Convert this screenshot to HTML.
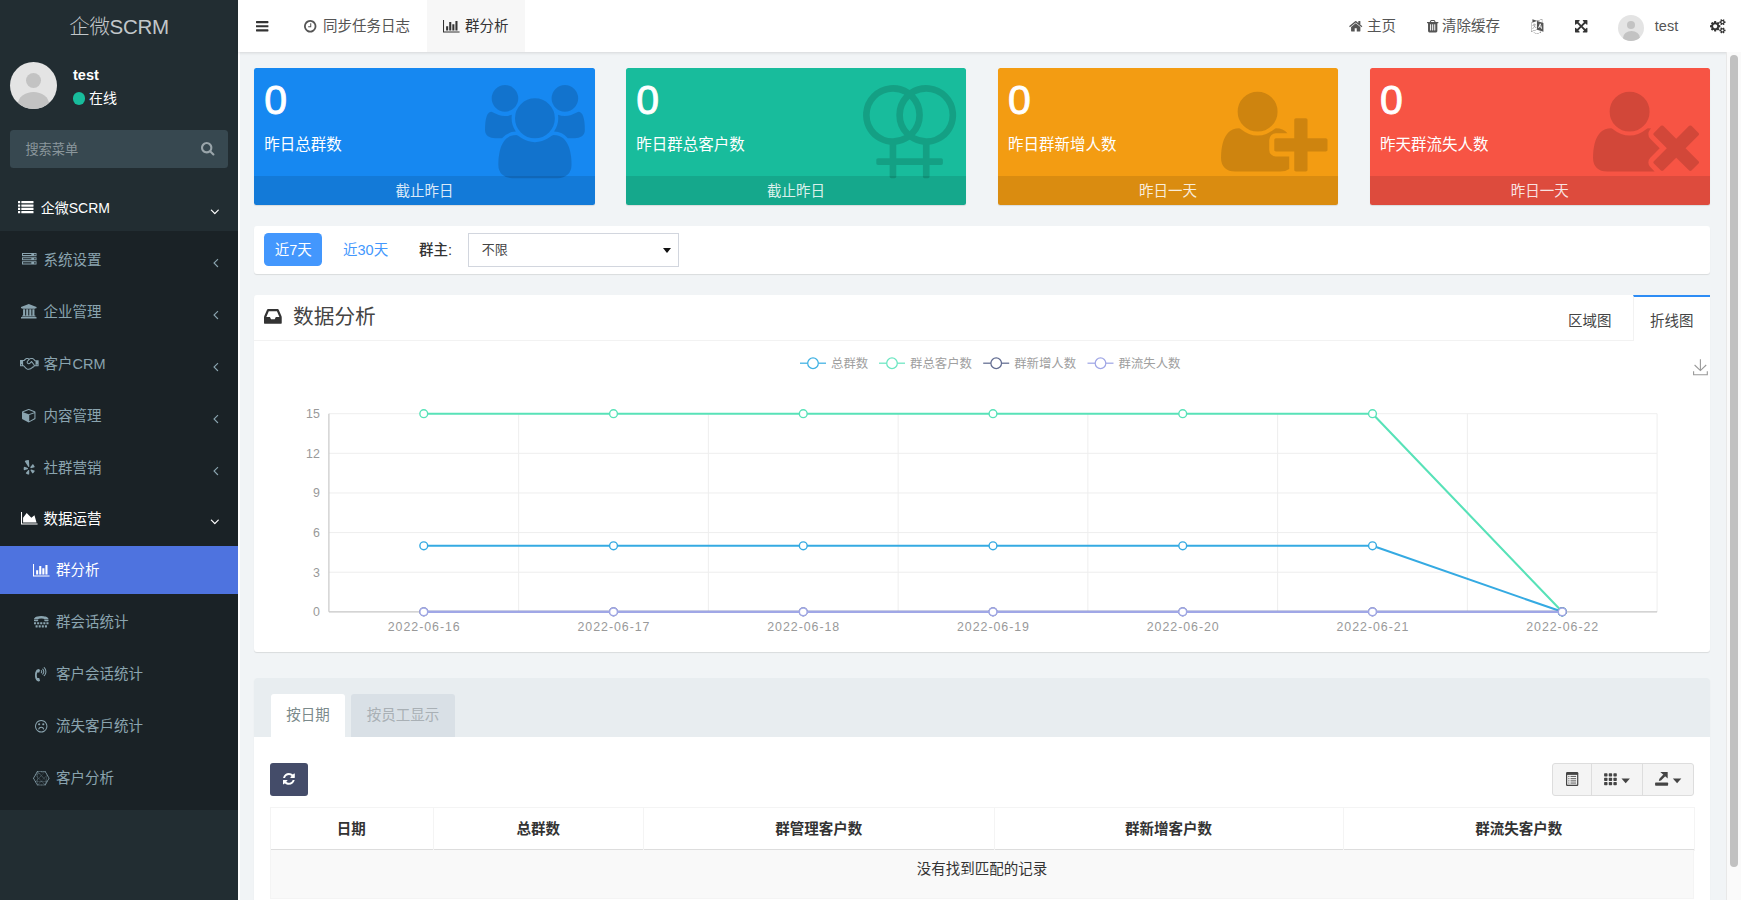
<!DOCTYPE html>
<html lang="zh-CN">
<head>
<meta charset="utf-8">
<title>企微SCRM</title>
<style>
*{box-sizing:border-box;margin:0;padding:0}
html,body{width:1741px;height:900px;overflow:hidden}
body{font-family:"Liberation Sans","Noto Sans CJK SC",sans-serif;font-size:14.5px;color:#333;background:#f1f4f6;position:relative}
svg.i{display:inline-block;fill:currentColor;vertical-align:middle;overflow:visible}
.abs{position:absolute}
/* sidebar */
#side{position:absolute;left:0;top:0;width:238px;height:900px;background:#222d32;color:#b8c7ce}
#logo{position:absolute;left:0;top:1.3px;width:238px;height:52px;line-height:52px;text-align:center;font-size:20.5px;font-weight:300;color:#c2c7ca;letter-spacing:-0.3px}
#avatar{position:absolute;left:10px;top:62px;width:47px;height:47px;border-radius:50%;background:#e4e4e4;overflow:hidden}
#avatar:before{content:"";position:absolute;left:16px;top:11px;width:15px;height:15px;border-radius:50%;background:#c3c3c3}
#avatar:after{content:"";position:absolute;left:8px;top:29.5px;width:31px;height:24px;border-radius:50%;background:#c3c3c3}
#uname{position:absolute;left:73px;top:66px;font-weight:bold;font-size:14.5px;color:#fff;line-height:18px}
#ustat{position:absolute;left:72.5px;top:89px;font-size:14px;color:#fff;line-height:18px;white-space:nowrap}
#ustat b{display:inline-block;width:12.5px;height:12.5px;border-radius:50%;background:#18bc9c;vertical-align:-1.5px;margin-right:4px}
#search{position:absolute;left:10.4px;top:129.7px;width:217.4px;height:38.3px;background:#374850;border-radius:3.5px}
#search span{position:absolute;left:15px;top:1.4px;line-height:38px;font-size:13.2px;color:#8b979c}
#search svg{position:absolute;left:190.6px;top:11px;color:#9aa5aa}
.m1{position:absolute;left:0;width:238px;height:52px}
.m1 .tx{position:absolute;left:40.7px;top:0.5px;line-height:52px;font-size:14px;color:#fff;white-space:nowrap}
#sub{position:absolute;left:0;top:231px;width:238px;height:579px;background:#1a2226}
.m2{position:absolute;left:0;width:238px;height:52px;color:#8aa4af}
.m2 .tx{position:absolute;left:43.5px;top:1px;line-height:52px;font-size:14.5px;white-space:nowrap}
.m2 .ic{position:absolute;left:20px;top:0;height:52px;width:18px;display:flex;align-items:center;justify-content:center}
.m2 .ar{position:absolute;left:213px;top:3px;height:52px;display:flex;align-items:center}
.m2.on{color:#fff}
.m3{position:absolute;left:0;width:238px;height:48px;color:#8aa4af}
.m3 .tx{position:absolute;left:56px;top:0.3px;line-height:48px;font-size:14.5px;white-space:nowrap}
.m3 .ic{position:absolute;left:32px;top:0;height:48px;width:18px;display:flex;align-items:center;justify-content:center}
.m3.on{background:#4e73df;color:#fff}
/* header */
#top{position:absolute;left:238px;top:0;width:1503px;height:52px;background:#fff;box-shadow:0 1px 3px rgba(0,0,0,.12);color:#555}
#top .t{position:absolute;top:0;line-height:52px;font-size:14.5px;white-space:nowrap}
#top .ic{position:absolute;top:0;height:52px;display:flex;align-items:center}
#tabon{position:absolute;left:189px;top:0;width:98px;height:52px;background:#f7f7f7}
/* cards */
.card{position:absolute;top:67.5px;width:341.3px;height:137px;border-radius:2.5px;color:#fff;box-shadow:0 1px 1px rgba(0,0,0,.1);overflow:hidden}
.card .n{position:absolute;left:10.5px;top:8.1px;font-size:41px;line-height:48px;font-weight:normal;-webkit-text-stroke:0.9px #fff}
.card .l{position:absolute;left:10.5px;top:66.7px;font-size:15.5px;line-height:22px;white-space:nowrap}
.card .f{position:absolute;left:0;top:108px;width:100%;height:29px;background:rgba(0,0,0,.1);text-align:center;font-size:14.5px;line-height:30.2px;color:rgba(255,255,255,.85)}
.card .bg{position:absolute;color:rgba(0,0,0,.15)}
/* panels */
.panel{position:absolute;left:254px;width:1456px;background:#fff;border-radius:3px;box-shadow:0 1px 1px rgba(0,0,0,.1)}
.th{top:131.4px;height:41px;line-height:41px;text-align:center;font-weight:bold;font-size:14.5px;color:#333}
.vl{top:129.6px;width:1px;height:44px;background:#f4f4f4}
.caret{width:0;height:0;border-left:4px solid transparent;border-right:4px solid transparent;border-top:4.2px solid #444}
</style>
</head>
<body>
<div id="side">
  <div id="logo">企微SCRM</div>
  <div id="avatar"></div>
  <div id="uname">test</div>
  <div id="ustat"><b></b>在线</div>
  <div id="search"><span>搜索菜单</span><svg class="i " style="width:13.46px;height:14.5px;" viewBox="0 -1536 1664 1792"><path transform="scale(1,-1)" d="M1152 704q0 185 -131.5 316.5t-316.5 131.5t-316.5 -131.5t-131.5 -316.5t131.5 -316.5t316.5 -131.5t316.5 131.5t131.5 316.5zM1664 -128q0 -52 -38 -90t-90 -38q-54 0 -90 38l-343 342q-179 -124 -399 -124q-143 0 -273.5 55.5t-225 150t-150 225t-55.5 273.5
t55.5 273.5t150 225t225 150t273.5 55.5t273.5 -55.5t225 -150t150 -225t55.5 -273.5q0 -220 -124 -399l343 -343q37 -37 37 -90z"/></svg></div>
  <div class="m1" style="top:181px"><span class="abs" style="left:18px;top:1px;height:52px;display:flex;align-items:center;color:#fff"><svg class="i " style="width:15.50px;height:15.5px;" viewBox="0 -1536 1792 1792"><path transform="scale(1,-1)" d="M256 224v-192q0 -13 -9.5 -22.5t-22.5 -9.5h-192q-13 0 -22.5 9.5t-9.5 22.5v192q0 13 9.5 22.5t22.5 9.5h192q13 0 22.5 -9.5t9.5 -22.5zM256 608v-192q0 -13 -9.5 -22.5t-22.5 -9.5h-192q-13 0 -22.5 9.5t-9.5 22.5v192q0 13 9.5 22.5t22.5 9.5h192q13 0 22.5 -9.5
t9.5 -22.5zM256 992v-192q0 -13 -9.5 -22.5t-22.5 -9.5h-192q-13 0 -22.5 9.5t-9.5 22.5v192q0 13 9.5 22.5t22.5 9.5h192q13 0 22.5 -9.5t9.5 -22.5zM1792 224v-192q0 -13 -9.5 -22.5t-22.5 -9.5h-1344q-13 0 -22.5 9.5t-9.5 22.5v192q0 13 9.5 22.5t22.5 9.5h1344
q13 0 22.5 -9.5t9.5 -22.5zM256 1376v-192q0 -13 -9.5 -22.5t-22.5 -9.5h-192q-13 0 -22.5 9.5t-9.5 22.5v192q0 13 9.5 22.5t22.5 9.5h192q13 0 22.5 -9.5t9.5 -22.5zM1792 608v-192q0 -13 -9.5 -22.5t-22.5 -9.5h-1344q-13 0 -22.5 9.5t-9.5 22.5v192q0 13 9.5 22.5
t22.5 9.5h1344q13 0 22.5 -9.5t9.5 -22.5zM1792 992v-192q0 -13 -9.5 -22.5t-22.5 -9.5h-1344q-13 0 -22.5 9.5t-9.5 22.5v192q0 13 9.5 22.5t22.5 9.5h1344q13 0 22.5 -9.5t9.5 -22.5zM1792 1376v-192q0 -13 -9.5 -22.5t-22.5 -9.5h-1344q-13 0 -22.5 9.5t-9.5 22.5v192
q0 13 9.5 22.5t22.5 9.5h1344q13 0 22.5 -9.5t9.5 -22.5z"/></svg></span><span class="tx">企微SCRM</span><span class="abs" style="left:210px;top:4px;height:52px;display:flex;align-items:center;color:#fff"><svg class="i " style="width:9.64px;height:15.0px;" viewBox="0 -1536 1152 1792"><path transform="scale(1,-1)" d="M1075 800q0 -13 -10 -23l-466 -466q-10 -10 -23 -10t-23 10l-466 466q-10 10 -10 23t10 23l50 50q10 10 23 10t23 -10l393 -393l393 393q10 10 23 10t23 -10l50 -50q10 -10 10 -23z"/></svg></span></div>
  <div id="sub">
    <div class="m2" style="top:2px"><span class="ic"><svg class="i " style="width:14.50px;height:14.5px;" viewBox="0 -1536 1792 1792"><path transform="scale(1,-1)" d="M128 128h1024v128h-1024v-128zM128 640h1024v128h-1024v-128zM1696 192q0 40 -28 68t-68 28t-68 -28t-28 -68t28 -68t68 -28t68 28t28 68zM128 1152h1024v128h-1024v-128zM1696 704q0 40 -28 68t-68 28t-68 -28t-28 -68t28 -68t68 -28t68 28t28 68zM1696 1216
q0 40 -28 68t-68 28t-68 -28t-28 -68t28 -68t68 -28t68 28t28 68zM1792 384v-384h-1792v384h1792zM1792 896v-384h-1792v384h1792zM1792 1408v-384h-1792v384h1792z"/></svg></span><span class="tx">系统设置</span><span class="ar"><svg class="i " style="width:5.36px;height:15.0px;" viewBox="0 -1536 640 1792"><path transform="scale(1,-1)" d="M627 992q0 -13 -10 -23l-393 -393l393 -393q10 -10 10 -23t-10 -23l-50 -50q-10 -10 -23 -10t-23 10l-466 466q-10 10 -10 23t10 23l466 466q10 10 23 10t23 -10l50 -50q10 -10 10 -23z"/></svg></span></div>
    <div class="m2" style="top:54px"><span class="ic"><svg class="i " style="width:16.57px;height:14.5px;" viewBox="0 -1536 2048 1792"><path transform="scale(1,-1)" d="M960 1536l960 -384v-128h-128q0 -26 -20.5 -45t-48.5 -19h-1526q-28 0 -48.5 19t-20.5 45h-128v128zM256 896h256v-768h128v768h256v-768h128v768h256v-768h128v768h256v-768h59q28 0 48.5 -19t20.5 -45v-64h-1664v64q0 26 20.5 45t48.5 19h59v768zM1851 -64
q28 0 48.5 -19t20.5 -45v-128h-1920v128q0 26 20.5 45t48.5 19h1782z"/></svg></span><span class="tx">企业管理</span><span class="ar"><svg class="i " style="width:5.36px;height:15.0px;" viewBox="0 -1536 640 1792"><path transform="scale(1,-1)" d="M627 992q0 -13 -10 -23l-393 -393l393 -393q10 -10 10 -23t-10 -23l-50 -50q-10 -10 -23 -10t-23 10l-466 466q-10 10 -10 23t10 23l466 466q10 10 23 10t23 -10l50 -50q10 -10 10 -23z"/></svg></span></div>
    <div class="m2" style="top:106px"><span class="ic"><svg class="i " style="width:18.64px;height:14.5px;" viewBox="0 -1536 2304 1792"><path transform="scale(1,-1)" d="M192 384q40 0 56 32t0 64t-56 32t-56 -32t0 -64t56 -32zM1665 442q-10 13 -38.5 50t-41.5 54t-38 49t-42.5 53t-40.5 47t-45 49l-125 -140q-83 -94 -208.5 -92t-205.5 98q-57 69 -56.5 158t58.5 157l177 206q-22 11 -51 16.5t-47.5 6t-56.5 -0.5t-49 -1q-92 0 -158 -66
l-158 -158h-155v-544q5 0 21 0.5t22 0t19.5 -2t20.5 -4.5t17.5 -8.5t18.5 -13.5l297 -292q115 -111 227 -111q78 0 125 47q57 -20 112.5 8t72.5 85q74 -6 127 44q20 18 36 45.5t14 50.5q10 -10 43 -10q43 0 77 21t49.5 53t12 71.5t-30.5 73.5zM1824 384h96v512h-93l-157 180
q-66 76 -169 76h-167q-89 0 -146 -67l-209 -243q-28 -33 -28 -75t27 -75q43 -51 110 -52t111 49l193 218q25 23 53.5 21.5t47 -27t8.5 -56.5q16 -19 56 -63t60 -68q29 -36 82.5 -105.5t64.5 -84.5q52 -66 60 -140zM2112 384q40 0 56 32t0 64t-56 32t-56 -32t0 -64t56 -32z
M2304 960v-640q0 -26 -19 -45t-45 -19h-434q-27 -65 -82 -106.5t-125 -51.5q-33 -48 -80.5 -81.5t-102.5 -45.5q-42 -53 -104.5 -81.5t-128.5 -24.5q-60 -34 -126 -39.5t-127.5 14t-117 53.5t-103.5 81l-287 282h-358q-26 0 -45 19t-19 45v672q0 26 19 45t45 19h421
q14 14 47 48t47.5 48t44 40t50.5 37.5t51 25.5t62 19.5t68 5.5h117q99 0 181 -56q82 56 181 56h167q35 0 67 -6t56.5 -14.5t51.5 -26.5t44.5 -31t43 -39.5t39 -42t41 -48t41.5 -48.5h355q26 0 45 -19t19 -45z"/></svg></span><span class="tx">客户CRM</span><span class="ar"><svg class="i " style="width:5.36px;height:15.0px;" viewBox="0 -1536 640 1792"><path transform="scale(1,-1)" d="M627 992q0 -13 -10 -23l-393 -393l393 -393q10 -10 10 -23t-10 -23l-50 -50q-10 -10 -23 -10t-23 10l-466 466q-10 10 -10 23t10 23l466 466q10 10 23 10t23 -10l50 -50q10 -10 10 -23z"/></svg></span></div>
    <div class="m2" style="top:158px"><span class="ic"><svg class="i " style="width:14.50px;height:14.5px;" viewBox="0 -1536 1792 1792"><path transform="scale(1,-1)" d="M896 -93l640 349v636l-640 -233v-752zM832 772l698 254l-698 254l-698 -254zM1664 1024v-768q0 -35 -18 -65t-49 -47l-704 -384q-28 -16 -61 -16t-61 16l-704 384q-31 17 -49 47t-18 65v768q0 40 23 73t61 47l704 256q22 8 44 8t44 -8l704 -256q38 -14 61 -47t23 -73z
"/></svg></span><span class="tx">内容管理</span><span class="ar"><svg class="i " style="width:5.36px;height:15.0px;" viewBox="0 -1536 640 1792"><path transform="scale(1,-1)" d="M627 992q0 -13 -10 -23l-393 -393l393 -393q10 -10 10 -23t-10 -23l-50 -50q-10 -10 -23 -10t-23 10l-466 466q-10 10 -10 23t10 23l466 466q10 10 23 10t23 -10l50 -50q10 -10 10 -23z"/></svg></span></div>
    <div class="m2" style="top:210px"><span class="ic"><svg class="i " style="width:12.43px;height:14.5px;" viewBox="0 -1536 1536 1792"><path transform="scale(1,-1)" d="M773 217v-127q-1 -292 -6 -305q-12 -32 -51 -40q-54 -9 -181.5 38t-162.5 89q-13 15 -17 36q-1 12 4 26q4 10 34 47t181 216q1 0 60 70q15 19 39.5 24.5t49.5 -3.5q24 -10 37.5 -29t12.5 -42zM624 468q-3 -55 -52 -70l-120 -39q-275 -88 -292 -88q-35 2 -54 36
q-12 25 -17 75q-8 76 1 166.5t30 124.5t56 32q13 0 202 -77q71 -29 115 -47l84 -34q23 -9 35.5 -30.5t11.5 -48.5zM1450 171q-7 -54 -91.5 -161t-135.5 -127q-37 -14 -63 7q-14 10 -184 287l-47 77q-14 21 -11.5 46t19.5 46q35 43 83 26q1 -1 119 -40q203 -66 242 -79.5
t47 -20.5q28 -22 22 -61zM778 803q5 -102 -54 -122q-58 -17 -114 71l-378 598q-8 35 19 62q41 43 207.5 89.5t224.5 31.5q40 -10 49 -45q3 -18 22 -305.5t24 -379.5zM1440 695q3 -39 -26 -59q-15 -10 -329 -86q-67 -15 -91 -23l1 2q-23 -6 -46 4t-37 32q-30 47 0 87
q1 1 75 102q125 171 150 204t34 39q28 19 65 2q48 -23 123 -133.5t81 -167.5v-3z"/></svg></span><span class="tx">社群营销</span><span class="ar"><svg class="i " style="width:5.36px;height:15.0px;" viewBox="0 -1536 640 1792"><path transform="scale(1,-1)" d="M627 992q0 -13 -10 -23l-393 -393l393 -393q10 -10 10 -23t-10 -23l-50 -50q-10 -10 -23 -10t-23 10l-466 466q-10 10 -10 23t10 23l466 466q10 10 23 10t23 -10l50 -50q10 -10 10 -23z"/></svg></span></div>
    <div class="m2 on" style="top:261px"><span class="ic"><svg class="i " style="width:16.57px;height:14.5px;" viewBox="0 -1536 2048 1792"><path transform="scale(1,-1)" d="M2048 0v-128h-2048v1536h128v-1408h1920zM1664 1024l256 -896h-1664v576l448 576l576 -576z"/></svg></span><span class="tx">数据运营</span><span class="ar" style="left:210px;top:0;padding-top:7px"><svg class="i " style="width:9.64px;height:15.0px;" viewBox="0 -1536 1152 1792"><path transform="scale(1,-1)" d="M1075 800q0 -13 -10 -23l-466 -466q-10 -10 -23 -10t-23 10l-466 466q-10 10 -10 23t10 23l50 50q10 10 23 10t23 -10l393 -393l393 393q10 10 23 10t23 -10l50 -50q10 -10 10 -23z"/></svg></span></div>
    <div class="m3 on" style="top:315px"><span class="ic"><svg class="i " style="width:16.57px;height:14.5px;" viewBox="0 -1536 2048 1792"><path transform="scale(1,-1)" d="M640 640v-512h-256v512h256zM1024 1152v-1024h-256v1024h256zM2048 0v-128h-2048v1536h128v-1408h1920zM1408 896v-768h-256v768h256zM1792 1280v-1152h-256v1152h256z"/></svg></span><span class="tx">群分析</span></div>
    <div class="m3" style="top:367px"><span class="ic"><svg class="i " style="width:14.50px;height:14.5px;" viewBox="0 -1536 1792 1792"><path transform="scale(1,-1)" d="M448 224v-192q0 -14 -9 -23t-23 -9h-192q-14 0 -23 9t-9 23v192q0 14 9 23t23 9h192q14 0 23 -9t9 -23zM256 608v-192q0 -14 -9 -23t-23 -9h-192q-14 0 -23 9t-9 23v192q0 14 9 23t23 9h192q14 0 23 -9t9 -23zM832 224v-192q0 -14 -9 -23t-23 -9h-192q-14 0 -23 9t-9 23
v192q0 14 9 23t23 9h192q14 0 23 -9t9 -23zM640 608v-192q0 -14 -9 -23t-23 -9h-192q-14 0 -23 9t-9 23v192q0 14 9 23t23 9h192q14 0 23 -9t9 -23zM66 768q-28 0 -47 19t-19 46v129h514v-129q0 -27 -19 -46t-46 -19h-383zM1216 224v-192q0 -14 -9 -23t-23 -9h-192
q-14 0 -23 9t-9 23v192q0 14 9 23t23 9h192q14 0 23 -9t9 -23zM1024 608v-192q0 -14 -9 -23t-23 -9h-192q-14 0 -23 9t-9 23v192q0 14 9 23t23 9h192q14 0 23 -9t9 -23zM1600 224v-192q0 -14 -9 -23t-23 -9h-192q-14 0 -23 9t-9 23v192q0 14 9 23t23 9h192q14 0 23 -9t9 -23
zM1408 608v-192q0 -14 -9 -23t-23 -9h-192q-14 0 -23 9t-9 23v192q0 14 9 23t23 9h192q14 0 23 -9t9 -23zM1792 1016v-13h-514v10q0 104 -382 102q-382 -1 -382 -102v-10h-514v13q0 17 8.5 43t34 64t65.5 75.5t110.5 76t160 67.5t224 47.5t293.5 18.5t293 -18.5t224 -47.5
t160.5 -67.5t110.5 -76t65.5 -75.5t34 -64t8.5 -43zM1792 608v-192q0 -14 -9 -23t-23 -9h-192q-14 0 -23 9t-9 23v192q0 14 9 23t23 9h192q14 0 23 -9t9 -23zM1792 962v-129q0 -27 -19 -46t-46 -19h-384q-27 0 -46 19t-19 46v129h514z"/></svg></span><span class="tx">群会话统计</span></div>
    <div class="m3" style="top:419px"><span class="ic"><svg class="i " style="width:11.39px;height:14.5px;" viewBox="0 -1536 1408 1792"><path transform="scale(1,-1)" d="M617 -153q0 11 -13 58t-31 107t-20 69q-1 4 -5 26.5t-8.5 36t-13.5 21.5q-15 14 -51 14q-23 0 -70 -5.5t-71 -5.5q-34 0 -47 11q-6 5 -11 15.5t-7.5 20t-6.5 24t-5 18.5q-37 128 -37 255t37 255q1 4 5 18.5t6.5 24t7.5 20t11 15.5q13 11 47 11q24 0 71 -5.5t70 -5.5
q36 0 51 14q9 8 13.5 21.5t8.5 36t5 26.5q2 9 20 69t31 107t13 58q0 22 -43.5 52.5t-75.5 42.5q-20 8 -45 8q-34 0 -98 -18q-57 -17 -96.5 -40.5t-71 -66t-46 -70t-45.5 -94.5q-6 -12 -9 -19q-49 -107 -68 -216t-19 -244t19 -244t68 -216q56 -122 83 -161q63 -91 179 -127
l6 -2q64 -18 98 -18q25 0 45 8q32 12 75.5 42.5t43.5 52.5zM776 760q-26 0 -45 19t-19 45.5t19 45.5q37 37 37 90q0 52 -37 91q-19 19 -19 45t19 45t45 19t45 -19q75 -75 75 -181t-75 -181q-21 -19 -45 -19zM957 579q-27 0 -45 19q-19 19 -19 45t19 45q112 114 112 272
t-112 272q-19 19 -19 45t19 45t45 19t45 -19q150 -150 150 -362t-150 -362q-18 -19 -45 -19zM1138 398q-27 0 -45 19q-19 19 -19 45t19 45q90 91 138.5 208t48.5 245t-48.5 245t-138.5 208q-19 19 -19 45t19 45t45 19t45 -19q109 -109 167 -249t58 -294t-58 -294t-167 -249
q-18 -19 -45 -19z"/></svg></span><span class="tx">客户会话统计</span></div>
    <div class="m3" style="top:471px"><span class="ic"><svg class="i " style="width:12.43px;height:14.5px;" viewBox="0 -1536 1536 1792"><path transform="scale(1,-1)" d="M1134 307q8 -25 -4 -48.5t-37 -31.5t-49 4t-32 38q-25 80 -92.5 129.5t-151.5 49.5t-151.5 -49.5t-92.5 -129.5q-8 -26 -31.5 -38t-48.5 -4q-26 8 -38 31.5t-4 48.5q37 121 138 195t228 74t228 -74t138 -195zM640 896q0 -53 -37.5 -90.5t-90.5 -37.5t-90.5 37.5
t-37.5 90.5t37.5 90.5t90.5 37.5t90.5 -37.5t37.5 -90.5zM1152 896q0 -53 -37.5 -90.5t-90.5 -37.5t-90.5 37.5t-37.5 90.5t37.5 90.5t90.5 37.5t90.5 -37.5t37.5 -90.5zM1408 640q0 130 -51 248.5t-136.5 204t-204 136.5t-248.5 51t-248.5 -51t-204 -136.5t-136.5 -204
t-51 -248.5t51 -248.5t136.5 -204t204 -136.5t248.5 -51t248.5 51t204 136.5t136.5 204t51 248.5zM1536 640q0 -209 -103 -385.5t-279.5 -279.5t-385.5 -103t-385.5 103t-279.5 279.5t-103 385.5t103 385.5t279.5 279.5t385.5 103t385.5 -103t279.5 -279.5t103 -385.5z"/></svg></span><span class="tx">流失客戶统计</span></div>
    <div class="m3" style="top:523px"><span class="ic"><svg class="i " style="width:16.57px;height:14.5px;" viewBox="0 -1536 2048 1792"><path transform="scale(1,-1)" d="M2048 641q0 -21 -13 -36.5t-33 -19.5l-205 -356q3 -9 3 -18q0 -20 -12.5 -35.5t-32.5 -19.5l-193 -337q3 -8 3 -16q0 -23 -16.5 -40t-40.5 -17q-25 0 -41 18h-400q-17 -20 -43 -20t-43 20h-399q-17 -20 -43 -20q-23 0 -40 16.5t-17 40.5q0 8 4 20l-193 335
q-20 4 -32.5 19.5t-12.5 35.5q0 9 3 18l-206 356q-20 5 -32.5 20.5t-12.5 35.5q0 21 13.5 36.5t33.5 19.5l199 344q0 1 -0.5 3t-0.5 3q0 36 34 51l209 363q-4 10 -4 18q0 24 17 40.5t40 16.5q26 0 44 -21h396q16 21 43 21t43 -21h398q18 21 44 21q23 0 40 -16.5t17 -40.5
q0 -6 -4 -18l207 -358q23 -1 39 -17.5t16 -38.5q0 -13 -7 -27l187 -324q19 -4 31.5 -19.5t12.5 -35.5zM1063 -158h389l-342 354h-143l-342 -354h360q18 16 39 16t39 -16zM112 654q1 -4 1 -13q0 -10 -2 -15l208 -360l15 -6l188 199v347l-187 194q-13 -8 -29 -10zM986 1438
h-388l190 -200l554 200h-280q-16 -16 -38 -16t-38 16zM1689 226q1 6 5 11l-64 68l-17 -79h76zM1583 226l22 105l-252 266l-296 -307l63 -64h463zM1495 -142l16 28l65 310h-427l333 -343q8 4 13 5zM578 -158h5l342 354h-373v-335l4 -6q14 -5 22 -13zM552 226h402l64 66
l-309 321l-157 -166v-221zM359 226h163v189l-168 -177q4 -8 5 -12zM358 1051q0 -1 0.5 -2t0.5 -2q0 -16 -8 -29l171 -177v269zM552 1121v-311l153 -157l297 314l-223 236zM556 1425l-4 -8v-264l205 74l-191 201q-6 -2 -10 -3zM1447 1438h-16l-621 -224l213 -225zM1023 946
l-297 -315l311 -319l296 307zM688 634l-136 141v-284zM1038 270l-42 -44h85zM1374 618l238 -251l132 624l-3 5l-1 1zM1718 1018q-8 13 -8 29v2l-216 376q-5 1 -13 5l-437 -463l310 -327zM522 1142v223l-163 -282zM522 196h-163l163 -283v283zM1607 196l-48 -227l130 227h-82
zM1729 266l207 361q-2 10 -2 14q0 1 3 16l-171 296l-129 -612l77 -82q5 3 15 7z"/></svg></span><span class="tx">客户分析</span></div>
  </div>
</div>
<div class="abs" style="left:238px;top:52px;width:1.9px;height:848px;background:#fff"></div>
<div id="top">
  <div id="tabon"></div>
  <span class="ic" style="left:17.8px;color:#333"><svg class="i " style="width:12.43px;height:14.5px;" viewBox="0 -1536 1536 1792"><path transform="scale(1,-1)" d="M1536 192v-128q0 -26 -19 -45t-45 -19h-1408q-26 0 -45 19t-19 45v128q0 26 19 45t45 19h1408q26 0 45 -19t19 -45zM1536 704v-128q0 -26 -19 -45t-45 -19h-1408q-26 0 -45 19t-19 45v128q0 26 19 45t45 19h1408q26 0 45 -19t19 -45zM1536 1216v-128q0 -26 -19 -45
t-45 -19h-1408q-26 0 -45 19t-19 45v128q0 26 19 45t45 19h1408q26 0 45 -19t19 -45z"/></svg></span>
  <span class="ic" style="left:65.8px"><svg class="i " style="width:12.43px;height:14.5px;" viewBox="0 -1536 1536 1792"><path transform="scale(1,-1)" d="M896 992v-448q0 -14 -9 -23t-23 -9h-320q-14 0 -23 9t-9 23v64q0 14 9 23t23 9h224v352q0 14 9 23t23 9h64q14 0 23 -9t9 -23zM1312 640q0 148 -73 273t-198 198t-273 73t-273 -73t-198 -198t-73 -273t73 -273t198 -198t273 -73t273 73t198 198t73 273zM1536 640
q0 -209 -103 -385.5t-279.5 -279.5t-385.5 -103t-385.5 103t-279.5 279.5t-103 385.5t103 385.5t279.5 279.5t385.5 103t385.5 -103t279.5 -279.5t103 -385.5z"/></svg></span><span class="t" style="left:85px">同步任务日志</span>
  <span class="ic" style="left:204.8px;color:#333"><svg class="i " style="width:16.57px;height:14.5px;" viewBox="0 -1536 2048 1792"><path transform="scale(1,-1)" d="M640 640v-512h-256v512h256zM1024 1152v-1024h-256v1024h256zM2048 0v-128h-2048v1536h128v-1408h1920zM1408 896v-768h-256v768h256zM1792 1280v-1152h-256v1152h256z"/></svg></span><span class="t" style="left:227px;color:#333">群分析</span>
  <span class="ic" style="left:1110.8px"><svg class="i " style="width:13.46px;height:14.5px;" viewBox="0 -1536 1664 1792"><path transform="scale(1,-1)" d="M1408 544v-480q0 -26 -19 -45t-45 -19h-384v384h-256v-384h-384q-26 0 -45 19t-19 45v480q0 1 0.5 3t0.5 3l575 474l575 -474q1 -2 1 -6zM1631 613l-62 -74q-8 -9 -21 -11h-3q-13 0 -21 7l-692 577l-692 -577q-12 -8 -24 -7q-13 2 -21 11l-62 74q-8 10 -7 23.5t11 21.5
l719 599q32 26 76 26t76 -26l244 -204v195q0 14 9 23t23 9h192q14 0 23 -9t9 -23v-408l219 -182q10 -8 11 -21.5t-7 -23.5z"/></svg></span><span class="t" style="left:1129px">主页</span>
  <span class="ic" style="left:1188.8px"><svg class="i " style="width:11.39px;height:14.5px;" viewBox="0 -1536 1408 1792"><path transform="scale(1,-1)" d="M512 160v704q0 14 -9 23t-23 9h-64q-14 0 -23 -9t-9 -23v-704q0 -14 9 -23t23 -9h64q14 0 23 9t9 23zM768 160v704q0 14 -9 23t-23 9h-64q-14 0 -23 -9t-9 -23v-704q0 -14 9 -23t23 -9h64q14 0 23 9t9 23zM1024 160v704q0 14 -9 23t-23 9h-64q-14 0 -23 -9t-9 -23v-704
q0 -14 9 -23t23 -9h64q14 0 23 9t9 23zM480 1152h448l-48 117q-7 9 -17 11h-317q-10 -2 -17 -11zM1408 1120v-64q0 -14 -9 -23t-23 -9h-96v-948q0 -83 -47 -143.5t-113 -60.5h-832q-66 0 -113 58.5t-47 141.5v952h-96q-14 0 -23 9t-9 23v64q0 14 9 23t23 9h309l70 167
q15 37 54 63t79 26h320q40 0 79 -26t54 -63l70 -167h309q14 0 23 -9t9 -23z"/></svg></span><span class="t" style="left:1204px">清除缓存</span>
  <span class="ic" style="left:1292.8px"><svg class="i " style="width:12.43px;height:14.5px;" viewBox="0 -1536 1536 1792"><path transform="scale(1,-1)" d="M654 458q-1 -3 -12.5 0.5t-31.5 11.5l-20 9q-44 20 -87 49q-7 5 -41 31.5t-38 28.5q-67 -103 -134 -181q-81 -95 -105 -110q-4 -2 -19.5 -4t-18.5 0q6 4 82 92q21 24 85.5 115t78.5 118q17 30 51 98.5t36 77.5q-8 1 -110 -33q-8 -2 -27.5 -7.5t-34.5 -9.5t-17 -5
q-2 -2 -2 -10.5t-1 -9.5q-5 -10 -31 -15q-23 -7 -47 0q-18 4 -28 21q-4 6 -5 23q6 2 24.5 5t29.5 6q58 16 105 32q100 35 102 35q10 2 43 19.5t44 21.5q9 3 21.5 8t14.5 5.5t6 -0.5q2 -12 -1 -33q0 -2 -12.5 -27t-26.5 -53.5t-17 -33.5q-25 -50 -77 -131l64 -28
q12 -6 74.5 -32t67.5 -28q4 -1 10.5 -25.5t4.5 -30.5zM449 944q3 -15 -4 -28q-12 -23 -50 -38q-30 -12 -60 -12q-26 3 -49 26q-14 15 -18 41l1 3q3 -3 19.5 -5t26.5 0t58 16q36 12 55 14q17 0 21 -17zM1147 815l63 -227l-139 42zM39 15l694 232v1032l-694 -233v-1031z
M1280 332l102 -31l-181 657l-100 31l-216 -536l102 -31l45 110l211 -65zM777 1294l573 -184v380zM1088 -29l158 -13l-54 -160l-40 66q-130 -83 -276 -108q-58 -12 -91 -12h-84q-79 0 -199.5 39t-183.5 85q-8 7 -8 16q0 8 5 13.5t13 5.5q4 0 18 -7.5t30.5 -16.5t20.5 -11
q73 -37 159.5 -61.5t157.5 -24.5q95 0 167 14.5t157 50.5q15 7 30.5 15.5t34 19t28.5 16.5zM1536 1050v-1079l-774 246q-14 -6 -375 -127.5t-368 -121.5q-13 0 -18 13q0 1 -1 3v1078q3 9 4 10q5 6 20 11q107 36 149 50v384l558 -198q2 0 160.5 55t316 108.5t161.5 53.5
q20 0 20 -21v-418z"/></svg></span>
  <span class="ic" style="left:1336.8px;color:#333"><svg class="i " style="width:12.43px;height:14.5px;" viewBox="0 -1536 1536 1792"><path transform="scale(1,-1)" d="M1283 995l-355 -355l355 -355l144 144q29 31 70 14q39 -17 39 -59v-448q0 -26 -19 -45t-45 -19h-448q-42 0 -59 40q-17 39 14 69l144 144l-355 355l-355 -355l144 -144q31 -30 14 -69q-17 -40 -59 -40h-448q-26 0 -45 19t-19 45v448q0 42 40 59q39 17 69 -14l144 -144
l355 355l-355 355l-144 -144q-19 -19 -45 -19q-12 0 -24 5q-40 17 -40 59v448q0 26 19 45t45 19h448q42 0 59 -40q17 -39 -14 -69l-144 -144l355 -355l355 355l-144 144q-31 30 -14 69q17 40 59 40h448q26 0 45 -19t19 -45v-448q0 -42 -39 -59q-13 -5 -25 -5q-26 0 -45 19z
"/></svg></span>
  <span class="abs" style="left:1380px;top:14.6px;width:26px;height:26px;border-radius:50%;background:#e4e4e4;overflow:hidden"><i style="position:absolute;left:8.8px;top:6px;width:8.4px;height:8.4px;border-radius:50%;background:#c3c3c3"></i><i style="position:absolute;left:4.5px;top:16.3px;width:17px;height:14px;border-radius:50%;background:#c3c3c3"></i></span><span class="t" style="left:1416.8px">test</span>
  <span class="ic" style="left:1471.8px;color:#333"><svg class="i " style="width:15.54px;height:14.5px;" viewBox="0 -1536 1920 1792"><path transform="scale(1,-1)" d="M896 640q0 106 -75 181t-181 75t-181 -75t-75 -181t75 -181t181 -75t181 75t75 181zM1664 128q0 52 -38 90t-90 38t-90 -38t-38 -90q0 -53 37.5 -90.5t90.5 -37.5t90.5 37.5t37.5 90.5zM1664 1152q0 52 -38 90t-90 38t-90 -38t-38 -90q0 -53 37.5 -90.5t90.5 -37.5
t90.5 37.5t37.5 90.5zM1280 731v-185q0 -10 -7 -19.5t-16 -10.5l-155 -24q-11 -35 -32 -76q34 -48 90 -115q7 -11 7 -20q0 -12 -7 -19q-23 -30 -82.5 -89.5t-78.5 -59.5q-11 0 -21 7l-115 90q-37 -19 -77 -31q-11 -108 -23 -155q-7 -24 -30 -24h-186q-11 0 -20 7.5t-10 17.5
l-23 153q-34 10 -75 31l-118 -89q-7 -7 -20 -7q-11 0 -21 8q-144 133 -144 160q0 9 7 19q10 14 41 53t47 61q-23 44 -35 82l-152 24q-10 1 -17 9.5t-7 19.5v185q0 10 7 19.5t16 10.5l155 24q11 35 32 76q-34 48 -90 115q-7 11 -7 20q0 12 7 20q22 30 82 89t79 59q11 0 21 -7
l115 -90q34 18 77 32q11 108 23 154q7 24 30 24h186q11 0 20 -7.5t10 -17.5l23 -153q34 -10 75 -31l118 89q8 7 20 7q11 0 21 -8q144 -133 144 -160q0 -8 -7 -19q-12 -16 -42 -54t-45 -60q23 -48 34 -82l152 -23q10 -2 17 -10.5t7 -19.5zM1920 198v-140q0 -16 -149 -31
q-12 -27 -30 -52q51 -113 51 -138q0 -4 -4 -7q-122 -71 -124 -71q-8 0 -46 47t-52 68q-20 -2 -30 -2t-30 2q-14 -21 -52 -68t-46 -47q-2 0 -124 71q-4 3 -4 7q0 25 51 138q-18 25 -30 52q-149 15 -149 31v140q0 16 149 31q13 29 30 52q-51 113 -51 138q0 4 4 7q4 2 35 20
t59 34t30 16q8 0 46 -46.5t52 -67.5q20 2 30 2t30 -2q51 71 92 112l6 2q4 0 124 -70q4 -3 4 -7q0 -25 -51 -138q17 -23 30 -52q149 -15 149 -31zM1920 1222v-140q0 -16 -149 -31q-12 -27 -30 -52q51 -113 51 -138q0 -4 -4 -7q-122 -71 -124 -71q-8 0 -46 47t-52 68
q-20 -2 -30 -2t-30 2q-14 -21 -52 -68t-46 -47q-2 0 -124 71q-4 3 -4 7q0 25 51 138q-18 25 -30 52q-149 15 -149 31v140q0 16 149 31q13 29 30 52q-51 113 -51 138q0 4 4 7q4 2 35 20t59 34t30 16q8 0 46 -46.5t52 -67.5q20 2 30 2t30 -2q51 71 92 112l6 2q4 0 124 -70
q4 -3 4 -7q0 -25 -51 -138q17 -23 30 -52q149 -15 149 -31z"/></svg></span>
</div>
<div class="card" style="left:253.8px;width:341.2px;background:#1688f1"><span class="bg" style="right:10.6px;top:17.2px"><svg class="i " style="width:99.86px;height:93.2px;" viewBox="0 -1536 1920 1792"><path transform="scale(1,-1)" d="M593 640q-162 -5 -265 -128h-134q-82 0 -138 40.5t-56 118.5q0 353 124 353q6 0 43.5 -21t97.5 -42.5t119 -21.5q67 0 133 23q-5 -37 -5 -66q0 -139 81 -256zM1664 3q0 -120 -73 -189.5t-194 -69.5h-874q-121 0 -194 69.5t-73 189.5q0 53 3.5 103.5t14 109t26.5 108.5
t43 97.5t62 81t85.5 53.5t111.5 20q10 0 43 -21.5t73 -48t107 -48t135 -21.5t135 21.5t107 48t73 48t43 21.5q61 0 111.5 -20t85.5 -53.5t62 -81t43 -97.5t26.5 -108.5t14 -109t3.5 -103.5zM640 1280q0 -106 -75 -181t-181 -75t-181 75t-75 181t75 181t181 75t181 -75
t75 -181zM1344 896q0 -159 -112.5 -271.5t-271.5 -112.5t-271.5 112.5t-112.5 271.5t112.5 271.5t271.5 112.5t271.5 -112.5t112.5 -271.5zM1920 671q0 -78 -56 -118.5t-138 -40.5h-134q-103 123 -265 128q81 117 81 256q0 29 -5 66q66 -23 133 -23q59 0 119 21.5t97.5 42.5
t43.5 21q124 0 124 -353zM1792 1280q0 -106 -75 -181t-181 -75t-181 75t-75 181t75 181t181 75t181 -75t75 -181z"/></svg></span><div class="n">0</div><div class="l">昨日总群数</div><div class="f">截止昨日</div></div>
<div class="card" style="left:625.8px;width:340.5px;background:#18bc9c"><span class="bg" style="right:10.6px;top:17.2px"><svg class="i " style="width:93.20px;height:93.2px;" viewBox="0 -1536 1792 1792"><path transform="scale(1,-1)" d="M1790 1007q12 -155 -52.5 -292t-186 -224t-271.5 -103v-260h224q14 0 23 -9t9 -23v-64q0 -14 -9 -23t-23 -9h-224v-224q0 -14 -9 -23t-23 -9h-64q-14 0 -23 9t-9 23v224h-512v-224q0 -14 -9 -23t-23 -9h-64q-14 0 -23 9t-9 23v224h-224q-14 0 -23 9t-9 23v64q0 14 9 23
t23 9h224v260q-150 16 -271.5 103t-186 224t-52.5 292q17 206 164.5 356.5t352.5 169.5q206 21 377 -94q171 115 377 94q205 -19 352.5 -169.5t164.5 -356.5zM896 647q128 131 128 313t-128 313q-128 -131 -128 -313t128 -313zM576 512q115 0 218 57q-154 165 -154 391
q0 224 154 391q-103 57 -218 57q-185 0 -316.5 -131.5t-131.5 -316.5t131.5 -316.5t316.5 -131.5zM1152 128v260q-137 15 -256 94q-119 -79 -256 -94v-260h512zM1216 512q185 0 316.5 131.5t131.5 316.5t-131.5 316.5t-316.5 131.5q-115 0 -218 -57q154 -167 154 -391
q0 -226 -154 -391q103 -57 218 -57z"/></svg></span><div class="n">0</div><div class="l">昨日群总客户数</div><div class="f">截止昨日</div></div>
<div class="card" style="left:997.6px;width:340.7px;background:#f39c12"><span class="bg" style="right:10.6px;top:17.2px"><svg class="i " style="width:106.51px;height:93.2px;" viewBox="0 -1536 2048 1792"><path transform="scale(1,-1)" d="M704 640q-159 0 -271.5 112.5t-112.5 271.5t112.5 271.5t271.5 112.5t271.5 -112.5t112.5 -271.5t-112.5 -271.5t-271.5 -112.5zM1664 512h352q13 0 22.5 -9.5t9.5 -22.5v-192q0 -13 -9.5 -22.5t-22.5 -9.5h-352v-352q0 -13 -9.5 -22.5t-22.5 -9.5h-192q-13 0 -22.5 9.5
t-9.5 22.5v352h-352q-13 0 -22.5 9.5t-9.5 22.5v192q0 13 9.5 22.5t22.5 9.5h352v352q0 13 9.5 22.5t22.5 9.5h192q13 0 22.5 -9.5t9.5 -22.5v-352zM928 288q0 -52 38 -90t90 -38h256v-238q-68 -50 -171 -50h-874q-121 0 -194 69t-73 190q0 53 3.5 103.5t14 109t26.5 108.5
t43 97.5t62 81t85.5 53.5t111.5 20q19 0 39 -17q79 -61 154.5 -91.5t164.5 -30.5t164.5 30.5t154.5 91.5q20 17 39 17q132 0 217 -96h-223q-52 0 -90 -38t-38 -90v-192z"/></svg></span><div class="n">0</div><div class="l">昨日群新增人数</div><div class="f">昨日一天</div></div>
<div class="card" style="left:1369.6px;width:340.4px;background:#f75444"><span class="bg" style="right:10.6px;top:17.2px"><svg class="i " style="width:106.51px;height:93.2px;" viewBox="0 -1536 2048 1792"><path transform="scale(1,-1)" d="M704 640q-159 0 -271.5 112.5t-112.5 271.5t112.5 271.5t271.5 112.5t271.5 -112.5t112.5 -271.5t-112.5 -271.5t-271.5 -112.5zM1781 320l249 -249q9 -9 9 -23q0 -13 -9 -22l-136 -136q-9 -9 -22 -9q-14 0 -23 9l-249 249l-249 -249q-9 -9 -23 -9q-13 0 -22 9l-136 136
q-9 9 -9 22q0 14 9 23l249 249l-249 249q-9 9 -9 23q0 13 9 22l136 136q9 9 22 9q14 0 23 -9l249 -249l249 249q9 9 23 9q13 0 22 -9l136 -136q9 -9 9 -22q0 -14 -9 -23zM1283 320l-181 -181q-37 -37 -37 -91q0 -53 37 -90l83 -83q-21 -3 -44 -3h-874q-121 0 -194 69
t-73 190q0 53 3.5 103.5t14 109t26.5 108.5t43 97.5t62 81t85.5 53.5t111.5 20q19 0 39 -17q154 -122 319 -122t319 122q20 17 39 17q28 0 57 -6q-28 -27 -41 -50t-13 -56q0 -54 37 -91z"/></svg></span><div class="n">0</div><div class="l">昨天群流失人数</div><div class="f">昨日一天</div></div>

<div class="panel" style="top:225.6px;height:48.8px">
<div class="abs" style="left:10.3px;top:7.8px;width:57.8px;height:33px;border-radius:4.5px;background:#4397fd;color:#fff;text-align:center;line-height:34px;font-size:14.5px">近7天</div>
<div class="abs" style="left:89px;top:7.8px;line-height:34px;color:#4397fd;font-size:14.5px;white-space:nowrap">近30天</div>
<div class="abs" style="left:165px;top:7.8px;line-height:34px;color:#333;font-size:14.5px;font-weight:500;white-space:nowrap">群主:</div>
<div class="abs" style="left:214.3px;top:7.4px;width:210.5px;height:33.8px;border:1px solid #d2d6de;background:#fff"><span class="abs" style="left:12.5px;top:0;line-height:31.4px;font-size:13px;color:#444">不限</span><span class="abs" style="left:194px;top:13.6px;width:0;height:0;border-left:4.4px solid transparent;border-right:4.4px solid transparent;border-top:5px solid #111"></span></div>
</div>

<div class="panel" style="top:295px;height:356.5px">
<div class="abs" style="left:0;top:45.3px;width:1379px;height:1px;background:#f2f2f2"></div>
<div class="abs" style="left:1379px;top:0;width:77px;height:46.3px;border-top:2.9px solid #2d8cf5;border-left:1px solid #f2f2f2"></div>
<span class="abs" style="left:9.8px;top:10.6px;color:#333"><svg class="i " style="width:17.74px;height:20.7px;" viewBox="0 -1536 1536 1792"><path transform="scale(1,-1)" d="M1023 576h316q-1 3 -2.5 8.5t-2.5 7.5l-212 496h-708l-212 -496q-1 -3 -2.5 -8.5t-2.5 -7.5h316l95 -192h320zM1536 546v-482q0 -26 -19 -45t-45 -19h-1408q-26 0 -45 19t-19 45v482q0 62 25 123l238 552q10 25 36.5 42t52.5 17h832q26 0 52.5 -17t36.5 -42l238 -552
q25 -61 25 -123z"/></svg></span>
<div class="abs" style="left:39px;top:7.3px;line-height:30px;font-size:20.7px;color:#444;white-space:nowrap">数据分析</div>
<div class="abs" style="left:1314px;top:10.6px;line-height:30px;font-size:14.5px;color:#444;white-space:nowrap">区域图</div>
<div class="abs" style="left:1396px;top:10.6px;line-height:30px;font-size:14.5px;color:#444;white-space:nowrap">折线图</div>
<svg class="abs" style="left:0;top:0" width="1456" height="356" viewBox="254 295 1456 356" font-family="'Liberation Sans','Noto Sans CJK SC',sans-serif">
<line x1="328.9" x2="1657.1" y1="572.22" y2="572.22" stroke="#eeeeee" stroke-width="1"/>
<line x1="328.9" x2="1657.1" y1="532.59" y2="532.59" stroke="#eeeeee" stroke-width="1"/>
<line x1="328.9" x2="1657.1" y1="492.96" y2="492.96" stroke="#eeeeee" stroke-width="1"/>
<line x1="328.9" x2="1657.1" y1="453.33" y2="453.33" stroke="#eeeeee" stroke-width="1"/>
<line x1="328.9" x2="1657.1" y1="413.70" y2="413.70" stroke="#eeeeee" stroke-width="1"/>
<line x1="518.64" x2="518.64" y1="413.7" y2="611.85" stroke="#eeeeee" stroke-width="1"/>
<line x1="708.39" x2="708.39" y1="413.7" y2="611.85" stroke="#eeeeee" stroke-width="1"/>
<line x1="898.13" x2="898.13" y1="413.7" y2="611.85" stroke="#eeeeee" stroke-width="1"/>
<line x1="1087.87" x2="1087.87" y1="413.7" y2="611.85" stroke="#eeeeee" stroke-width="1"/>
<line x1="1277.61" x2="1277.61" y1="413.7" y2="611.85" stroke="#eeeeee" stroke-width="1"/>
<line x1="1467.36" x2="1467.36" y1="413.7" y2="611.85" stroke="#eeeeee" stroke-width="1"/>
<line x1="1657.10" x2="1657.10" y1="413.7" y2="611.85" stroke="#eeeeee" stroke-width="1"/>
<line x1="328.9" x2="328.9" y1="413.7" y2="611.85" stroke="#c6c6c6" stroke-width="1.15"/>
<line x1="328.9" x2="1657.1" y1="611.85" y2="611.85" stroke="#c6c6c6" stroke-width="1.15"/>
<text x="319.8" y="616.25" text-anchor="end" font-size="12.4" fill="#999">0</text>
<text x="319.8" y="576.62" text-anchor="end" font-size="12.4" fill="#999">3</text>
<text x="319.8" y="536.99" text-anchor="end" font-size="12.4" fill="#999">6</text>
<text x="319.8" y="497.36" text-anchor="end" font-size="12.4" fill="#999">9</text>
<text x="319.8" y="457.73" text-anchor="end" font-size="12.4" fill="#999">12</text>
<text x="319.8" y="418.10" text-anchor="end" font-size="12.4" fill="#999">15</text>
<text x="423.77" y="630.8" text-anchor="middle" font-size="12.4" fill="#999" textLength="72" lengthAdjust="spacing">2022-06-16</text>
<text x="613.51" y="630.8" text-anchor="middle" font-size="12.4" fill="#999" textLength="72" lengthAdjust="spacing">2022-06-17</text>
<text x="803.26" y="630.8" text-anchor="middle" font-size="12.4" fill="#999" textLength="72" lengthAdjust="spacing">2022-06-18</text>
<text x="993.00" y="630.8" text-anchor="middle" font-size="12.4" fill="#999" textLength="72" lengthAdjust="spacing">2022-06-19</text>
<text x="1182.74" y="630.8" text-anchor="middle" font-size="12.4" fill="#999" textLength="72" lengthAdjust="spacing">2022-06-20</text>
<text x="1372.49" y="630.8" text-anchor="middle" font-size="12.4" fill="#999" textLength="72" lengthAdjust="spacing">2022-06-21</text>
<text x="1562.23" y="630.8" text-anchor="middle" font-size="12.4" fill="#999" textLength="72" lengthAdjust="spacing">2022-06-22</text>
<polyline points="423.77,545.80 613.51,545.80 803.26,545.80 993.00,545.80 1182.74,545.80 1372.49,545.80 1562.23,611.85" fill="none" stroke="#35aae2" stroke-width="2.1" stroke-linejoin="bevel"/>
<circle cx="423.77" cy="545.80" r="3.9" fill="#fff" stroke="#35aae2" stroke-width="1.4"/>
<circle cx="613.51" cy="545.80" r="3.9" fill="#fff" stroke="#35aae2" stroke-width="1.4"/>
<circle cx="803.26" cy="545.80" r="3.9" fill="#fff" stroke="#35aae2" stroke-width="1.4"/>
<circle cx="993.00" cy="545.80" r="3.9" fill="#fff" stroke="#35aae2" stroke-width="1.4"/>
<circle cx="1182.74" cy="545.80" r="3.9" fill="#fff" stroke="#35aae2" stroke-width="1.4"/>
<circle cx="1372.49" cy="545.80" r="3.9" fill="#fff" stroke="#35aae2" stroke-width="1.4"/>
<circle cx="1562.23" cy="611.85" r="3.9" fill="#fff" stroke="#35aae2" stroke-width="1.4"/>
<polyline points="423.77,413.70 613.51,413.70 803.26,413.70 993.00,413.70 1182.74,413.70 1372.49,413.70 1562.23,611.85" fill="none" stroke="#58e2b8" stroke-width="2.1" stroke-linejoin="bevel"/>
<circle cx="423.77" cy="413.70" r="3.9" fill="#fff" stroke="#58e2b8" stroke-width="1.4"/>
<circle cx="613.51" cy="413.70" r="3.9" fill="#fff" stroke="#58e2b8" stroke-width="1.4"/>
<circle cx="803.26" cy="413.70" r="3.9" fill="#fff" stroke="#58e2b8" stroke-width="1.4"/>
<circle cx="993.00" cy="413.70" r="3.9" fill="#fff" stroke="#58e2b8" stroke-width="1.4"/>
<circle cx="1182.74" cy="413.70" r="3.9" fill="#fff" stroke="#58e2b8" stroke-width="1.4"/>
<circle cx="1372.49" cy="413.70" r="3.9" fill="#fff" stroke="#58e2b8" stroke-width="1.4"/>
<circle cx="1562.23" cy="611.85" r="3.9" fill="#fff" stroke="#58e2b8" stroke-width="1.4"/>
<polyline points="423.77,611.85 613.51,611.85 803.26,611.85 993.00,611.85 1182.74,611.85 1372.49,611.85 1562.23,611.85" fill="none" stroke="#626c91" stroke-width="2.1" stroke-linejoin="bevel"/>
<circle cx="423.77" cy="611.85" r="3.9" fill="#fff" stroke="#626c91" stroke-width="1.4"/>
<circle cx="613.51" cy="611.85" r="3.9" fill="#fff" stroke="#626c91" stroke-width="1.4"/>
<circle cx="803.26" cy="611.85" r="3.9" fill="#fff" stroke="#626c91" stroke-width="1.4"/>
<circle cx="993.00" cy="611.85" r="3.9" fill="#fff" stroke="#626c91" stroke-width="1.4"/>
<circle cx="1182.74" cy="611.85" r="3.9" fill="#fff" stroke="#626c91" stroke-width="1.4"/>
<circle cx="1372.49" cy="611.85" r="3.9" fill="#fff" stroke="#626c91" stroke-width="1.4"/>
<circle cx="1562.23" cy="611.85" r="3.9" fill="#fff" stroke="#626c91" stroke-width="1.4"/>
<polyline points="423.77,611.85 613.51,611.85 803.26,611.85 993.00,611.85 1182.74,611.85 1372.49,611.85 1562.23,611.85" fill="none" stroke="#a0a7e6" stroke-width="2.1" stroke-linejoin="bevel"/>
<circle cx="423.77" cy="611.85" r="3.9" fill="#fff" stroke="#a0a7e6" stroke-width="1.4"/>
<circle cx="613.51" cy="611.85" r="3.9" fill="#fff" stroke="#a0a7e6" stroke-width="1.4"/>
<circle cx="803.26" cy="611.85" r="3.9" fill="#fff" stroke="#a0a7e6" stroke-width="1.4"/>
<circle cx="993.00" cy="611.85" r="3.9" fill="#fff" stroke="#a0a7e6" stroke-width="1.4"/>
<circle cx="1182.74" cy="611.85" r="3.9" fill="#fff" stroke="#a0a7e6" stroke-width="1.4"/>
<circle cx="1372.49" cy="611.85" r="3.9" fill="#fff" stroke="#a0a7e6" stroke-width="1.4"/>
<circle cx="1562.23" cy="611.85" r="3.9" fill="#fff" stroke="#a0a7e6" stroke-width="1.4"/>
<line x1="800" x2="826" y1="363.2" y2="363.2" stroke="#3fb1e3" stroke-width="1.25"/><circle cx="813" cy="363.2" r="5.3" fill="#fff" stroke="#3fb1e3" stroke-width="1.25"/><text x="831" y="367.7" font-size="12.4" fill="#a0a0a0">总群数</text>
<line x1="879" x2="905" y1="363.2" y2="363.2" stroke="#6be6c1" stroke-width="1.25"/><circle cx="892" cy="363.2" r="5.3" fill="#fff" stroke="#6be6c1" stroke-width="1.25"/><text x="910" y="367.7" font-size="12.4" fill="#a0a0a0">群总客户数</text>
<line x1="983.2" x2="1009.2" y1="363.2" y2="363.2" stroke="#626c91" stroke-width="1.25"/><circle cx="996.2" cy="363.2" r="5.3" fill="#fff" stroke="#626c91" stroke-width="1.25"/><text x="1014.2" y="367.7" font-size="12.4" fill="#a0a0a0">群新增人数</text>
<line x1="1087.5" x2="1113.5" y1="363.2" y2="363.2" stroke="#a0a7e6" stroke-width="1.25"/><circle cx="1100.5" cy="363.2" r="5.3" fill="#fff" stroke="#a0a7e6" stroke-width="1.25"/><text x="1118.5" y="367.7" font-size="12.4" fill="#a0a0a0">群流失人数</text>
<g fill="none" stroke="#999" stroke-width="1.1"><path d="M1700.4 359.2v11.2M1694.6 365l5.8 5.6 5.8-5.6M1693.6 371.3v3.4h13.7v-3.4"/></g>
</svg>
</div>

<div class="panel" style="top:677.5px;height:240px;border-radius:3px 3px 0 0">
<div class="abs" style="left:0;top:0;width:1456px;height:59.6px;background:#e8edf0;border-radius:3px 3px 0 0"></div>
<div class="abs" style="left:16.6px;top:16.5px;width:74.6px;height:43.1px;background:#fff;border-radius:3px 3px 0 0;text-align:center;line-height:43px;font-size:14.5px;color:#7b8a8b">按日期</div>
<div class="abs" style="left:97.3px;top:16.5px;width:103.5px;height:43.1px;background:#d9e0e6;border-radius:3px 3px 0 0;text-align:center;line-height:43px;font-size:14.5px;color:#a9b0b5">按员工显示</div>
<div class="abs" style="left:15.7px;top:85.1px;width:38px;height:33.2px;background:#444c69;border-radius:3px;color:#fff;display:flex;align-items:center;justify-content:center"><svg class="i " style="width:11.83px;height:13.8px;" viewBox="0 -1536 1536 1792"><path transform="scale(1,-1)" d="M1511 480q0 -5 -1 -7q-64 -268 -268 -434.5t-478 -166.5q-146 0 -282.5 55t-243.5 157l-129 -129q-19 -19 -45 -19t-45 19t-19 45v448q0 26 19 45t45 19h448q26 0 45 -19t19 -45t-19 -45l-137 -137q71 -66 161 -102t187 -36q134 0 250 65t186 179q11 17 53 117
q8 23 30 23h192q13 0 22.5 -9.5t9.5 -22.5zM1536 1280v-448q0 -26 -19 -45t-45 -19h-448q-26 0 -45 19t-19 45t19 45l138 138q-148 137 -349 137q-134 0 -250 -65t-186 -179q-11 -17 -53 -117q-8 -23 -30 -23h-199q-13 0 -22.5 9.5t-9.5 22.5v7q65 268 270 434.5t480 166.5
q146 0 284 -55.5t245 -156.5l130 129q19 19 45 19t45 -19t19 -45z"/></svg></div>
<div class="abs" style="left:1297.7px;top:85.2px;width:142.5px;height:33.3px;background:#f4f4f4;border:1px solid #ddd;border-radius:3px;color:#444">
<span class="abs" style="left:38.8px;top:0;width:1px;height:31.3px;background:#ddd"></span>
<span class="abs" style="left:89.7px;top:0;width:1px;height:31.3px;background:#ddd"></span>
<svg class="abs" style="left:-1px;top:-1px" width="142.5" height="33.3" viewBox="1551.7 762.7 142.5 33.3">
<rect x="1565.7" y="771.8" width="12.3" height="13.8" rx="1.2" fill="#444"/>
<rect x="1566.9" y="774.6" width="9.9" height="9.8" fill="#f4f4f4"/>
<g fill="#666"><rect x="1568" y="775.6" width="1.1" height="1.1"/><rect x="1568" y="777.8" width="1.1" height="1.1"/><rect x="1568" y="780" width="1.1" height="1.1"/><rect x="1568" y="782.2" width="1.1" height="1.1"/>
<rect x="1570.2" y="775.6" width="5.6" height="1.1"/><rect x="1570.2" y="777.8" width="5.6" height="1.1"/><rect x="1570.2" y="780" width="5.6" height="1.1"/><rect x="1570.2" y="782.2" width="5.6" height="1.1"/></g>
<g fill="#444">
<rect x="1603.80" y="773.00" width="3.4" height="3.2" rx="0.7"/><rect x="1608.45" y="773.00" width="3.4" height="3.2" rx="0.7"/><rect x="1613.10" y="773.00" width="3.4" height="3.2" rx="0.7"/><rect x="1603.80" y="777.40" width="3.4" height="3.2" rx="0.7"/><rect x="1608.45" y="777.40" width="3.4" height="3.2" rx="0.7"/><rect x="1613.10" y="777.40" width="3.4" height="3.2" rx="0.7"/><rect x="1603.80" y="781.80" width="3.4" height="3.2" rx="0.7"/><rect x="1608.45" y="781.80" width="3.4" height="3.2" rx="0.7"/><rect x="1613.10" y="781.80" width="3.4" height="3.2" rx="0.7"/>
<path d="M1621.2 778.2h8.4l-4.2 4.8z"/>
<path d="M1672.6 778.2h8.4l-4.2 4.8z"/>
<rect x="1654.8" y="782.3" width="13" height="3.1" rx="0.7"/>
<path d="M1660 771.8h7.4v6.4z"/>
<path d="M1663.3 773.9l1.9 1.9-4.5 4.3-2.2.5.6-2.1z"/>
</g>
</svg>
</div>
<div class="abs" style="left:15.7px;top:129.6px;width:1424.5px;height:42.6px;border-top:1px solid #f4f4f4;border-bottom:1.6px solid #ddd"></div>
<div class="abs th" style="left:15.7px;width:163.3px">日期</div><div class="abs th" style="left:179.0px;width:210.4px">总群数</div><div class="abs th" style="left:389.4px;width:350.6px">群管理客户数</div><div class="abs th" style="left:740.0px;width:349.2px">群新增客户数</div><div class="abs th" style="left:1089.2px;width:351.0px">群流失客户数</div>
<span class="abs vl" style="left:15.7px"></span><span class="abs vl" style="left:179px"></span><span class="abs vl" style="left:389.4px"></span><span class="abs vl" style="left:740px"></span><span class="abs vl" style="left:1089.2px"></span><span class="abs vl" style="left:1439.7px"></span>
<div class="abs" style="left:15.7px;top:172.2px;width:1424.5px;height:49px;background:#f9f9f9;border-left:1px solid #f4f4f4;border-right:1px solid #f4f4f4;border-bottom:1px solid #f4f4f4;text-align:center;line-height:39.5px;font-size:14.5px;color:#333">没有找到匹配的记录</div>
</div>

<div class="abs" style="left:1726px;top:52px;width:15px;height:848px;background:#fafafa;border-left:1px solid #e8e8e8"></div>
<div class="abs" style="left:1730.2px;top:55px;width:7.7px;height:812.2px;border-radius:3.9px;background:#c1c1c1"></div>

</body>
</html>
